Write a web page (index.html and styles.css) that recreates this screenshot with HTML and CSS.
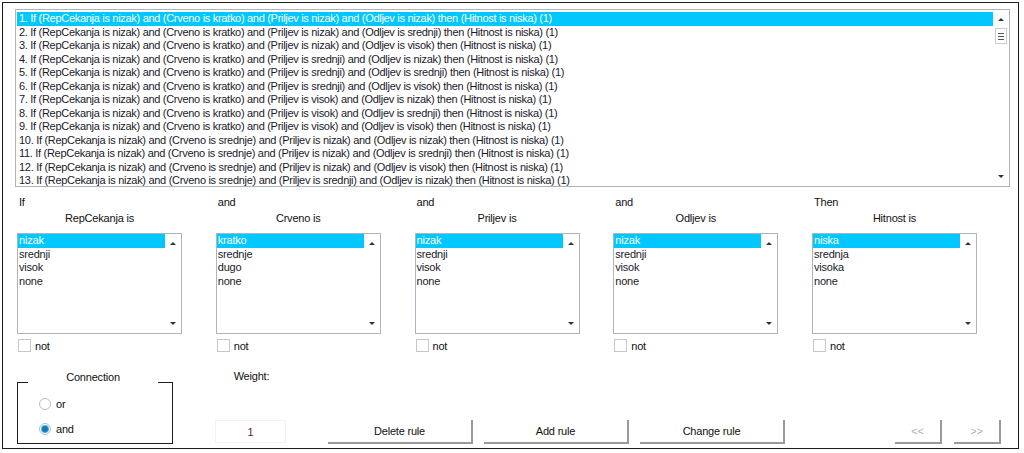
FILE: index.html
```html
<!DOCTYPE html>
<html>
<head>
<meta charset="utf-8">
<link rel="stylesheet" href="styles.css">
</head>
<body>
<div class="window">
  <div class="rulelist">
    <div class="rows">
      <div class="row sel">1. If (RepCekanja is nizak) and (Crveno is kratko) and (Priljev is nizak) and (Odljev is nizak) then (Hitnost is niska) (1)</div>
      <div class="row">2. If (RepCekanja is nizak) and (Crveno is kratko) and (Priljev is nizak) and (Odljev is srednji) then (Hitnost is niska) (1)</div>
      <div class="row">3. If (RepCekanja is nizak) and (Crveno is kratko) and (Priljev is nizak) and (Odljev is visok) then (Hitnost is niska) (1)</div>
      <div class="row">4. If (RepCekanja is nizak) and (Crveno is kratko) and (Priljev is srednji) and (Odljev is nizak) then (Hitnost is niska) (1)</div>
      <div class="row">5. If (RepCekanja is nizak) and (Crveno is kratko) and (Priljev is srednji) and (Odljev is srednji) then (Hitnost is niska) (1)</div>
      <div class="row">6. If (RepCekanja is nizak) and (Crveno is kratko) and (Priljev is srednji) and (Odljev is visok) then (Hitnost is niska) (1)</div>
      <div class="row">7. If (RepCekanja is nizak) and (Crveno is kratko) and (Priljev is visok) and (Odljev is nizak) then (Hitnost is niska) (1)</div>
      <div class="row">8. If (RepCekanja is nizak) and (Crveno is kratko) and (Priljev is visok) and (Odljev is srednji) then (Hitnost is niska) (1)</div>
      <div class="row">9. If (RepCekanja is nizak) and (Crveno is kratko) and (Priljev is visok) and (Odljev is visok) then (Hitnost is niska) (1)</div>
      <div class="row">10. If (RepCekanja is nizak) and (Crveno is srednje) and (Priljev is nizak) and (Odljev is nizak) then (Hitnost is niska) (1)</div>
      <div class="row">11. If (RepCekanja is nizak) and (Crveno is srednje) and (Priljev is nizak) and (Odljev is srednji) then (Hitnost is niska) (1)</div>
      <div class="row">12. If (RepCekanja is nizak) and (Crveno is srednje) and (Priljev is nizak) and (Odljev is visok) then (Hitnost is niska) (1)</div>
      <div class="row">13. If (RepCekanja is nizak) and (Crveno is srednje) and (Priljev is srednji) and (Odljev is nizak) then (Hitnost is niska) (1)</div>
    </div>
    <div class="vscroll big">
      <span class="arr up"></span>
      <span class="thumb"><i></i><i></i><i></i></span>
      <span class="fill"></span>
      <span class="arr down"></span>
    </div>
  </div>

  <div class="cols">
    <div class="col">
      <div class="kw">If</div>
      <div class="hdr">RepCekanja is</div>
      <div class="lb">
        <div class="items"><div class="it sel">nizak</div><div class="it">srednji</div><div class="it">visok</div><div class="it">none</div></div>
        <div class="vscroll"><span class="arr up"></span><span class="fill"></span><span class="arr down"></span></div>
      </div>
      <div class="chk"><span class="box"></span>not</div>
    </div>
    <div class="col">
      <div class="kw">and</div>
      <div class="hdr">Crveno is</div>
      <div class="lb">
        <div class="items"><div class="it sel">kratko</div><div class="it">srednje</div><div class="it">dugo</div><div class="it">none</div></div>
        <div class="vscroll"><span class="arr up"></span><span class="fill"></span><span class="arr down"></span></div>
      </div>
      <div class="chk"><span class="box"></span>not</div>
    </div>
    <div class="col">
      <div class="kw">and</div>
      <div class="hdr">Priljev is</div>
      <div class="lb">
        <div class="items"><div class="it sel">nizak</div><div class="it">srednji</div><div class="it">visok</div><div class="it">none</div></div>
        <div class="vscroll"><span class="arr up"></span><span class="fill"></span><span class="arr down"></span></div>
      </div>
      <div class="chk"><span class="box"></span>not</div>
    </div>
    <div class="col">
      <div class="kw">and</div>
      <div class="hdr">Odljev is</div>
      <div class="lb">
        <div class="items"><div class="it sel">nizak</div><div class="it">srednji</div><div class="it">visok</div><div class="it">none</div></div>
        <div class="vscroll"><span class="arr up"></span><span class="fill"></span><span class="arr down"></span></div>
      </div>
      <div class="chk"><span class="box"></span>not</div>
    </div>
    <div class="col">
      <div class="kw">Then</div>
      <div class="hdr">Hitnost is</div>
      <div class="lb">
        <div class="items"><div class="it sel">niska</div><div class="it">srednja</div><div class="it">visoka</div><div class="it">none</div></div>
        <div class="vscroll"><span class="arr up"></span><span class="fill"></span><span class="arr down"></span></div>
      </div>
      <div class="chk"><span class="box"></span>not</div>
    </div>
  </div>

  <div class="bottom">
    <div class="group">
      <div class="glabel">Connection</div>
      <div class="radio"><span class="rb"></span>or</div>
      <div class="radio"><span class="rb on"></span>and</div>
    </div>
    <div class="weight">
      <div class="wlabel">Weight:</div>
      <div class="wbox">1</div>
    </div>
    <div class="btns">
      <div class="btn">Delete rule</div>
      <div class="btn">Add rule</div>
      <div class="btn">Change rule</div>
    </div>
    <div class="nav">
      <div class="btn small dis">&lt;&lt;</div>
      <div class="btn small dis">&gt;&gt;</div>
    </div>
  </div>
</div>
</body>
</html>
```

FILE: styles.css
```css
* { box-sizing: border-box; }
html, body { margin: 0; padding: 0; background: #fff; }
body {
  font-family: "Liberation Sans", Arial, sans-serif;
  font-size: 11px;
  letter-spacing: -0.2px;
  color: #1a1a2a;
}
.window {
  margin: 2px 0 0 2px;
  width: 1017px;
  height: 447px;
  border: 1px solid #1c1c1c;
  overflow: hidden;
}
.rulelist {
  margin: 6px 0 0 12px;
  width: 995px;
  height: 178px;
  border: 1px solid #aeb4bc;
  display: flex;
}
.rows {
  flex: 1;
  padding: 2px 0 0 1px;
  overflow: hidden;
}
.row {
  height: 13.5px;
  line-height: 13.5px;
  padding-left: 2px;
  white-space: nowrap;
  letter-spacing: -0.3px;
}
.sel { background: #00c8ff; color: #fff; }
.vscroll {
  width: 16px;
  display: flex;
  flex-direction: column;
  align-items: center;
}
.vscroll .fill { flex: 1; }
.arr {
  width: 0; height: 0;
  border-left: 3px solid transparent;
  border-right: 3px solid transparent;
}
.arr.up { border-bottom: 3px solid #333; margin-top: 7px; }
.arr.down { border-top: 3px solid #333; margin-bottom: 7px; }
.vscroll.big .arr.up { margin-top: 8px; }
.vscroll.big .arr.down { margin-bottom: 8px; }
.thumb {
  margin-top: 7px;
  width: 12px;
  height: 16px;
  border: 1px solid #c8ccd2;
  display: flex;
  flex-direction: column;
  justify-content: center;
  align-items: center;
  gap: 2px;
}
.thumb i { display: block; width: 6px; height: 1px; background: #555; }

.cols {
  display: flex;
  gap: 33.75px;
  margin: 8px 0 0 14px;
}
.col { width: 165px; }
.kw { height: 14px; line-height: 14px; padding-left: 2px; color: #111; }
.hdr { margin-top: 2px; height: 14px; line-height: 14px; text-align: center; color: #111; }
.lb {
  margin-top: 8px;
  height: 101px;
  border: 1px solid #aeb4bc;
  display: flex;
}
.items { flex: 1; }
.it { height: 13.5px; line-height: 13.5px; padding-left: 1px; }
.lb .vscroll .arr.up { margin-top: 8px; }
.lb .vscroll .arr.down { margin-bottom: 8px; }
.chk {
  margin-top: 5px;
  padding-left: 1px;
  display: flex;
  align-items: center;
  height: 13px;
  color: #111;
}
.box {
  width: 13px; height: 13px;
  border: 1px solid #c4c8cc;
  background: #fff;
  margin-right: 4px;
}

.bottom {
  display: flex;
  margin: 17px 0 0 0;
  height: 75px;
  position: relative;
}
.group {
  position: relative;
  margin: 13px 0 0 14px;
  width: 156px;
  height: 62px;
  border: 1px solid #1c1c1c;
  padding: 14px 0 0 21px;
}
.glabel {
  position: absolute;
  top: -13px;
  left: 10px;
  width: 130px;
  height: 14px;
  line-height: 14px;
  background: #fff;
  text-align: center;
  color: #111;
}
.radio {
  display: flex;
  align-items: center;
  height: 13px;
  margin-bottom: 12px;
  color: #111;
}
.rb {
  width: 12px; height: 12px;
  border-radius: 50%;
  border: 1px solid #b8bcc2;
  background: #fff;
  margin-right: 5px;
  position: relative;
}
.rb.on::after {
  content: "";
  position: absolute;
  left: 2px; top: 2px;
  width: 6px; height: 6px;
  border-radius: 50%;
  background: #1a78b8;
  box-shadow: 0 0 0 1px #4cb4e8;
}
.weight {
  margin-left: 42px;
  width: 71px;
  display: flex;
  flex-direction: column;
  align-items: center;
}
.wlabel { margin-top: 0; height: 14px; line-height: 14px; color: #111; transform: translateX(1px); }
.wbox {
  margin-top: 37px;
  width: 71px;
  height: 23px;
  line-height: 23px;
  text-align: center;
  border: 1px solid #f2f2f2;
  color: #6a1830;
}
.btns {
  display: flex;
  gap: 11px;
  margin-left: 42px;
  margin-top: 51px;
}
.btn {
  width: 145px;
  height: 24px;
  line-height: 23px;
  text-align: center;
  border-right: 2px solid #9a9a9a;
  border-bottom: 2px solid #9a9a9a;
  color: #111;
}
.nav {
  display: flex;
  gap: 12px;
  margin-left: 110px;
  margin-top: 51px;
}
.btn.small { width: 47px; }
.btn.dis { color: #b0b0b0; }
```
